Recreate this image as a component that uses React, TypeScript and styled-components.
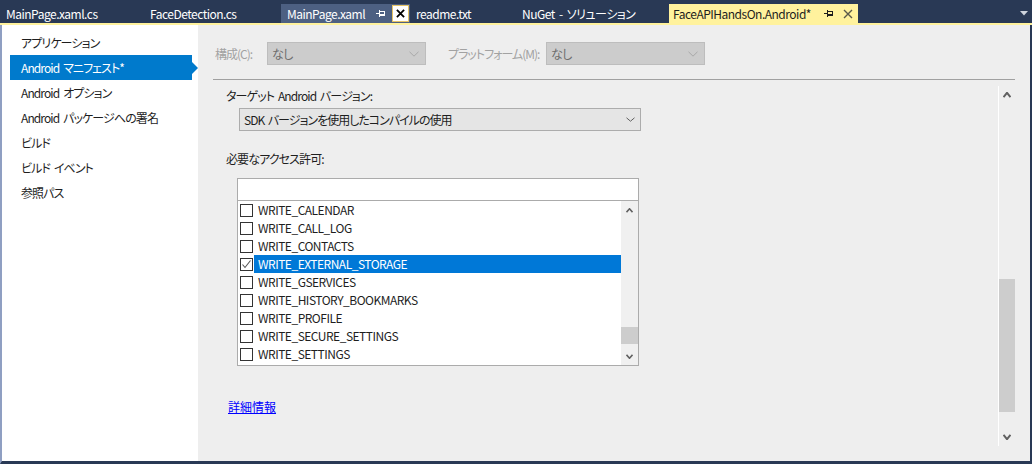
import React from "react";
import styled, { createGlobalStyle, css } from "styled-components";

const GlobalStyle = createGlobalStyle`
  html, body { margin: 0; padding: 0; }
  body {
    background: #293955;
    font-family: "Noto Sans CJK JP", "Noto Sans", sans-serif;
    font-size: 12px;
    letter-spacing: -0.5px;
    word-spacing: 2px;
    font-feature-settings: "palt" 1;
  }
  * { box-sizing: border-box; }
`;

const Window = styled.div`
  width: 1032px;
  height: 464px;
  display: flex;
  flex-direction: column;
  background: #293955;
  overflow: hidden;
`;

/* ---------- tab strip ---------- */
const TabBar = styled.div`
  height: 23px;
  flex: none;
  display: flex;
  align-items: flex-end;
`;

type TabVariant = "normal" | "hover" | "active";

const Tab = styled.div<{ $w: number; $variant: TabVariant }>`
  width: ${(p) => p.$w}px;
  height: 19px;
  flex: none;
  display: flex;
  align-items: center;
  padding: 0 1px 0 ${(p) => (p.$variant === "active" ? 4 : 6)}px;
  white-space: nowrap;
  line-height: 19px;
  color: #ffffff;
  ${(p) =>
    p.$variant === "hover" &&
    css`
      background: #4d6082;
    `}
  ${(p) =>
    p.$variant === "active" &&
    css`
      background: #fff29d;
      color: #1e1e1e;
      padding-right: 5px;
    `}
`;

const TabIcons = styled.div<{ $gap: number }>`
  margin-left: auto;
  display: flex;
  align-items: center;
  gap: ${(p) => p.$gap}px;
`;

const CloseBox = styled.div`
  width: 17px;
  height: 17px;
  background: #ffffff;
  border: 1px solid #e5c365;
  display: flex;
  align-items: center;
  justify-content: center;
`;

const OverflowButton = styled.div`
  margin-left: auto;
  align-self: center;
  margin-top: 4px;
  margin-right: 4px;
  display: flex;
`;

const YellowLine = styled.div`
  height: 2px;
  flex: none;
  background: #fff29d;
`;

/* ---------- body ---------- */
const Body = styled.div`
  flex: 1;
  display: flex;
  border-left: 2px solid #8f9fc2;
  border-right: 2px solid #293955;
  border-bottom: 3px solid #293955;
  min-height: 0;
`;

const Sidebar = styled.div`
  width: 196px;
  flex: none;
  background: #ffffff;
  padding-top: 5px;
  display: flex;
  flex-direction: column;
`;

const NavItem = styled.div<{ $selected?: boolean }>`
  position: relative;
  margin-left: 8px;
  width: 182px;
  height: 25px;
  line-height: 25px;
  padding-left: 11px;
  color: #1e1e1e;
  letter-spacing: -0.9px;
  white-space: nowrap;
  ${(p) =>
    p.$selected &&
    css`
      background: #007acc;
      color: #ffffff;
      &::after {
        content: "";
        position: absolute;
        right: -6px;
        top: 50%;
        margin-top: -6px;
        border-left: 6px solid #007acc;
        border-top: 6px solid transparent;
        border-bottom: 6px solid transparent;
      }
    `}
`;

const Main = styled.div`
  flex: 1;
  background: #eeeeee;
  display: flex;
  flex-direction: column;
  padding: 17px 15px 14px 15px;
  min-width: 0;
`;

const ConfigRow = styled.div`
  display: flex;
  align-items: center;
  padding-left: 2px;
  height: 23px;
`;

const ConfigLabel = styled.span<{ $w: number }>`
  width: ${(p) => p.$w}px;
  flex: none;
  color: #a2a2a2;
  letter-spacing: -1px;
  white-space: nowrap;
`;

const DisabledCombo = styled.div`
  width: 159px;
  height: 23px;
  flex: none;
  background: #cccccc;
  border: 1px solid #bdbdbd;
  display: flex;
  align-items: center;
  justify-content: space-between;
  padding: 0 6px 0 4px;
  color: #6d6d6d;
  margin-right: 22px;
`;

const Separator = styled.div`
  height: 1px;
  background: #a0a0a0;
  margin-top: 14px;
  flex: none;
`;

const ScrollArea = styled.div`
  margin-top: 6px;
  height: 360px;
  display: flex;
  flex: none;
`;

const Content = styled.div`
  flex: 1;
  padding: 2px 0 0 13px;
  display: flex;
  flex-direction: column;
  align-items: flex-start;
`;

const FieldLabel = styled.div<{ $mt?: number }>`
  line-height: 16px;
  height: 16px;
  color: #1e1e1e;
  letter-spacing: -0.9px;
  margin-top: ${(p) => p.$mt ?? 0}px;
`;

const Dropdown = styled.div`
  margin: 4px 0 0 13px;
  width: 402px;
  height: 23px;
  background: #e5e5e5;
  border: 1px solid #acacac;
  display: flex;
  align-items: center;
  justify-content: space-between;
  padding: 0 5px 0 4px;
  color: #1e1e1e;
  letter-spacing: -1px;
`;

const PermissionBox = styled.div`
  margin: 11px 0 0 11px;
  width: 402px;
  display: flex;
  flex-direction: column;
`;

const SearchInput = styled.div`
  height: 23px;
  background: #ffffff;
  border: 1px solid #ababab;
`;

const ListBox = styled.div`
  height: 165px;
  background: #ffffff;
  border: 1px solid #ababab;
  border-top: none;
  display: flex;
`;

const Rows = styled.div`
  flex: 1;
  display: flex;
  flex-direction: column;
`;

const Row = styled.div`
  height: 18px;
  display: flex;
  align-items: center;
  padding-left: 2px;
`;

const CheckBox = styled.div`
  width: 13px;
  height: 13px;
  flex: none;
  border: 1px solid #333333;
  background: #ffffff;
  display: flex;
  align-items: center;
  justify-content: center;
`;

const RowText = styled.div<{ $selected?: boolean }>`
  flex: 1;
  height: 18px;
  margin-left: 1px;
  line-height: 18px;
  padding-left: 4px;
  color: ${(p) => (p.$selected ? "#ffffff" : "#1e1e1e")};
  background: ${(p) => (p.$selected ? "#0078d7" : "transparent")};
  white-space: nowrap;
`;

const ScrollBar = styled.div<{ $w: number; $track: string; $edge?: boolean }>`
  width: ${(p) => p.$w}px;
  flex: none;
  background: ${(p) => p.$track};
  display: flex;
  flex-direction: column;
  ${(p) =>
    p.$edge &&
    css`
      border-left: 1px solid #ffffff;
    `}
`;

const ScrollButton = styled.div<{ $h: number }>`
  height: ${(p) => p.$h}px;
  flex: none;
  display: flex;
  align-items: center;
  justify-content: center;
`;

const ScrollTrack = styled.div`
  flex: 1;
  display: flex;
  flex-direction: column;
`;

const Thumb = styled.div<{ $offset: number; $size: number }>`
  margin-top: ${(p) => p.$offset}px;
  height: ${(p) => p.$size}px;
  background: #cdcdcd;
  flex: none;
`;

const MoreLink = styled.a`
  margin: 33px 0 0 2px;
  line-height: 16px;
  color: #0000ff;
  letter-spacing: 0;
  text-decoration: underline;
  cursor: pointer;
`;

/* ---------- icons ---------- */
const PinIcon = ({ color }: { color: string }) => (
  <svg width="9" height="9" viewBox="0 0 9 9" shapeRendering="crispEdges">
    <rect x="0" y="4" width="3" height="1" fill={color} />
    <rect x="3" y="1" width="1" height="7" fill={color} />
    <rect x="4" y="2" width="5" height="1" fill={color} />
    <rect x="8" y="2" width="1" height="5" fill={color} />
    <rect x="4" y="5" width="5" height="2" fill={color} />
  </svg>
);

const XIcon = ({ color, size, w }: { color: string; size: number; w: number }) => (
  <svg width={size} height={size} viewBox="0 0 10 10">
    <path d="M1 1L9 9M9 1L1 9" stroke={color} strokeWidth={w} fill="none" />
  </svg>
);

const Chevron = ({
  dir,
  w,
  h,
  color,
  sw,
}: {
  dir: "up" | "down";
  w: number;
  h: number;
  color: string;
  sw: number;
}) => (
  <svg width={w} height={h} viewBox={`0 0 ${w} ${h}`}>
    <polyline
      points={
        dir === "down"
          ? `0.5,0.8 ${w / 2},${h - 0.8} ${w - 0.5},0.8`
          : `0.5,${h - 0.8} ${w / 2},0.8 ${w - 0.5},${h - 0.8}`
      }
      stroke={color}
      strokeWidth={sw}
      fill="none"
    />
  </svg>
);

const CheckMark = () => (
  <svg width="11" height="11" viewBox="0 0 11 11">
    <polyline points="1.5,5.5 4,8.5 9.5,1.5" stroke="#555555" strokeWidth="1.1" fill="none" />
  </svg>
);

/* ---------- data ---------- */
const tabs: { label: string; w: number; variant: TabVariant }[] = [
  { label: "MainPage.xaml.cs", w: 144, variant: "normal" },
  { label: "FaceDetection.cs", w: 137, variant: "normal" },
  { label: "MainPage.xaml", w: 129, variant: "hover" },
  { label: "readme.txt", w: 106, variant: "normal" },
  { label: "NuGet - ソリューション", w: 153, variant: "normal" },
  { label: "FaceAPIHandsOn.Android*", w: 189, variant: "active" },
];

const navItems = [
  "アプリケーション",
  "Android マニフェスト*",
  "Android オプション",
  "Android パッケージへの署名",
  "ビルド",
  "ビルド イベント",
  "参照パス",
];

const permissions = [
  "WRITE_CALENDAR",
  "WRITE_CALL_LOG",
  "WRITE_CONTACTS",
  "WRITE_EXTERNAL_STORAGE",
  "WRITE_GSERVICES",
  "WRITE_HISTORY_BOOKMARKS",
  "WRITE_PROFILE",
  "WRITE_SECURE_SETTINGS",
  "WRITE_SETTINGS",
];

export default function App() {
  return (
    <>
      <GlobalStyle />
      <Window>
        <TabBar>
          {tabs.map((t) => (
            <Tab key={t.label} $w={t.w} $variant={t.variant}>
              {t.label}
              {t.variant === "hover" && (
                <TabIcons $gap={7}>
                  <PinIcon color="#ffffff" />
                  <CloseBox>
                    <XIcon color="#000000" size={9} w={2} />
                  </CloseBox>
                </TabIcons>
              )}
              {t.variant === "active" && (
                <TabIcons $gap={10}>
                  <PinIcon color="#1e1e1e" />
                  <XIcon color="#5a5a4a" size={10} w={1.4} />
                </TabIcons>
              )}
            </Tab>
          ))}
          <OverflowButton>
            <svg width="8" height="5" viewBox="0 0 8 5">
              <polygon points="0,0 8,0 4,4.5" fill="#ced4dd" />
            </svg>
          </OverflowButton>
        </TabBar>
        <YellowLine />
        <Body>
          <Sidebar>
            {navItems.map((n, i) => (
              <NavItem key={n} $selected={i === 1}>
                {n}
              </NavItem>
            ))}
          </Sidebar>
          <Main>
            <ConfigRow>
              <ConfigLabel $w={52}>構成(C):</ConfigLabel>
              <DisabledCombo>
                なし
                <Chevron dir="down" w={10} h={6} color="#a8a8a8" sw={1} />
              </DisabledCombo>
              <ConfigLabel $w={98}>プラットフォーム(M):</ConfigLabel>
              <DisabledCombo>
                なし
                <Chevron dir="down" w={10} h={6} color="#a8a8a8" sw={1} />
              </DisabledCombo>
            </ConfigRow>
            <Separator />
            <ScrollArea>
              <Content>
                <FieldLabel>ターゲット Android バージョン:</FieldLabel>
                <Dropdown>
                  SDK バージョンを使用したコンパイルの使用
                  <Chevron dir="down" w={9} h={5} color="#606060" sw={1} />
                </Dropdown>
                <FieldLabel $mt={20}>必要なアクセス許可:</FieldLabel>
                <PermissionBox>
                  <SearchInput />
                  <ListBox>
                    <Rows>
                      {permissions.map((p, i) => (
                        <Row key={p}>
                          <CheckBox>{i === 3 && <CheckMark />}</CheckBox>
                          <RowText $selected={i === 3}>{p}</RowText>
                        </Row>
                      ))}
                    </Rows>
                    <ScrollBar $w={17} $track="#f0f0f0">
                      <ScrollButton $h={18}>
                        <Chevron dir="up" w={7} h={5} color="#606060" sw={1.6} />
                      </ScrollButton>
                      <ScrollTrack>
                        <Thumb $offset={108} $size={17} />
                      </ScrollTrack>
                      <ScrollButton $h={18}>
                        <Chevron dir="down" w={7} h={5} color="#606060" sw={1.6} />
                      </ScrollButton>
                    </ScrollBar>
                  </ListBox>
                </PermissionBox>
                <MoreLink>詳細情報</MoreLink>
              </Content>
              <ScrollBar $w={17} $track="#eeeeee" $edge>
                <ScrollButton $h={18}>
                  <Chevron dir="up" w={8} h={6} color="#606060" sw={2} />
                </ScrollButton>
                <ScrollTrack>
                  <Thumb $offset={175} $size={133} />
                </ScrollTrack>
                <ScrollButton $h={18}>
                  <Chevron dir="down" w={8} h={6} color="#606060" sw={2} />
                </ScrollButton>
              </ScrollBar>
            </ScrollArea>
          </Main>
        </Body>
      </Window>
    </>
  );
}
